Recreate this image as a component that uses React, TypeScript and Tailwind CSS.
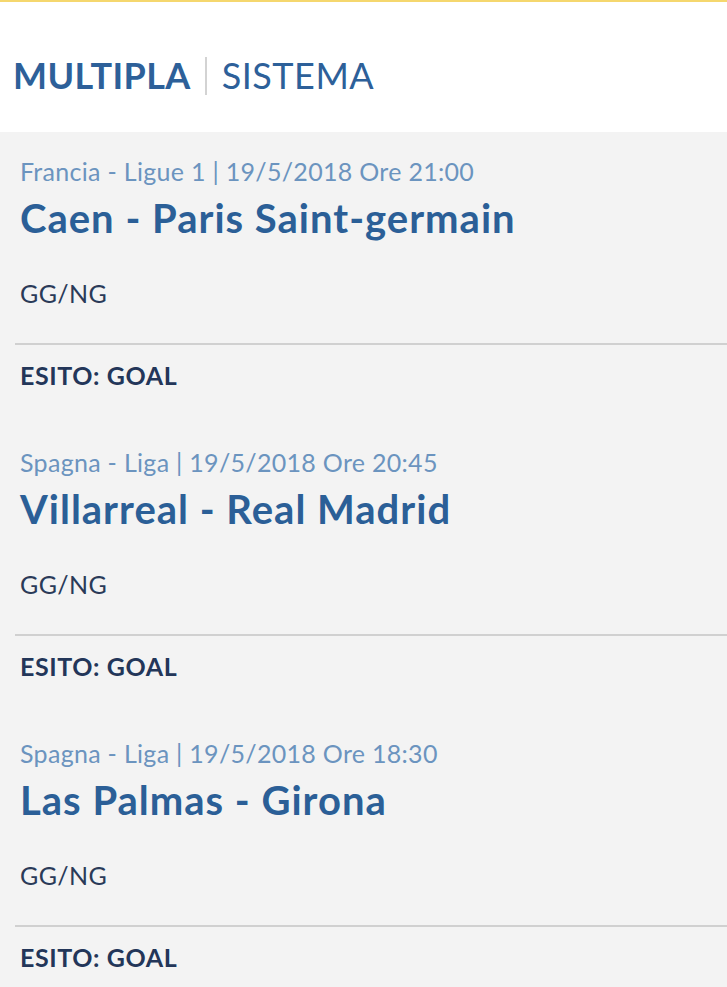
const EVENTS = [
  {
    meta: 'Francia - Ligue 1 | 19/5/2018 Ore 21:00',
    match: 'Caen - Paris Saint-germain',
    market: 'GG/NG',
    outcome: 'ESITO: GOAL',
  },
  {
    meta: 'Spagna - Liga | 19/5/2018 Ore 20:45',
    match: 'Villarreal - Real Madrid',
    market: 'GG/NG',
    outcome: 'ESITO: GOAL',
  },
  {
    meta: 'Spagna - Liga | 19/5/2018 Ore 18:30',
    match: 'Las Palmas - Girona',
    market: 'GG/NG',
    outcome: 'ESITO: GOAL',
  },
];

export default function App() {
  return (
    <div className="min-h-[987px] bg-[#f3f3f3] font-['Lato','Liberation_Sans',sans-serif]">
      <header className="h-[132px] border-t-2 border-[#f5d76e] bg-white pt-[52px] pl-[13px]">
        <div className="flex items-center">
          <span className="text-[36px] font-bold leading-[43px] tracking-[0.4px] text-[#2d6099]">MULTIPLA</span>
          <span className="ml-[14px] mr-[15px] h-[38px] w-[2px] bg-[#d3d3d3]" />
          <span className="text-[36px] leading-[43px] tracking-[0.5px] text-[#2d6099]">SISTEMA</span>
        </div>
      </header>

      <main className="pl-[15px]">
        {EVENTS.map((e, i) => (
          <section key={String(i)} className={i === 0 ? 'pt-[24px]' : 'pt-[57px]'}>
            <div className="pl-[5px]">
              <p className="text-[25px] leading-[30px] tracking-[0.3px] text-[#6b94bf]">{e.meta}</p>
              <h2 className="mt-[8px] text-[40px] font-bold leading-[48px] tracking-[1px] text-[#2b5f97]">
                {e.match}
              </h2>
              <p className="mt-[36px] text-[25px] leading-[30px] tracking-[0.4px] text-[#2a3a58]">{e.market}</p>
            </div>
            <div className="mt-[35px] h-[2px] bg-[#d0d0d0]" />
            <p className="mt-[16px] pl-[5px] text-[25px] font-bold leading-[29px] tracking-[0.6px] text-[#233659]">
              {e.outcome}
            </p>
          </section>
        ))}
      </main>
    </div>
  );
}
